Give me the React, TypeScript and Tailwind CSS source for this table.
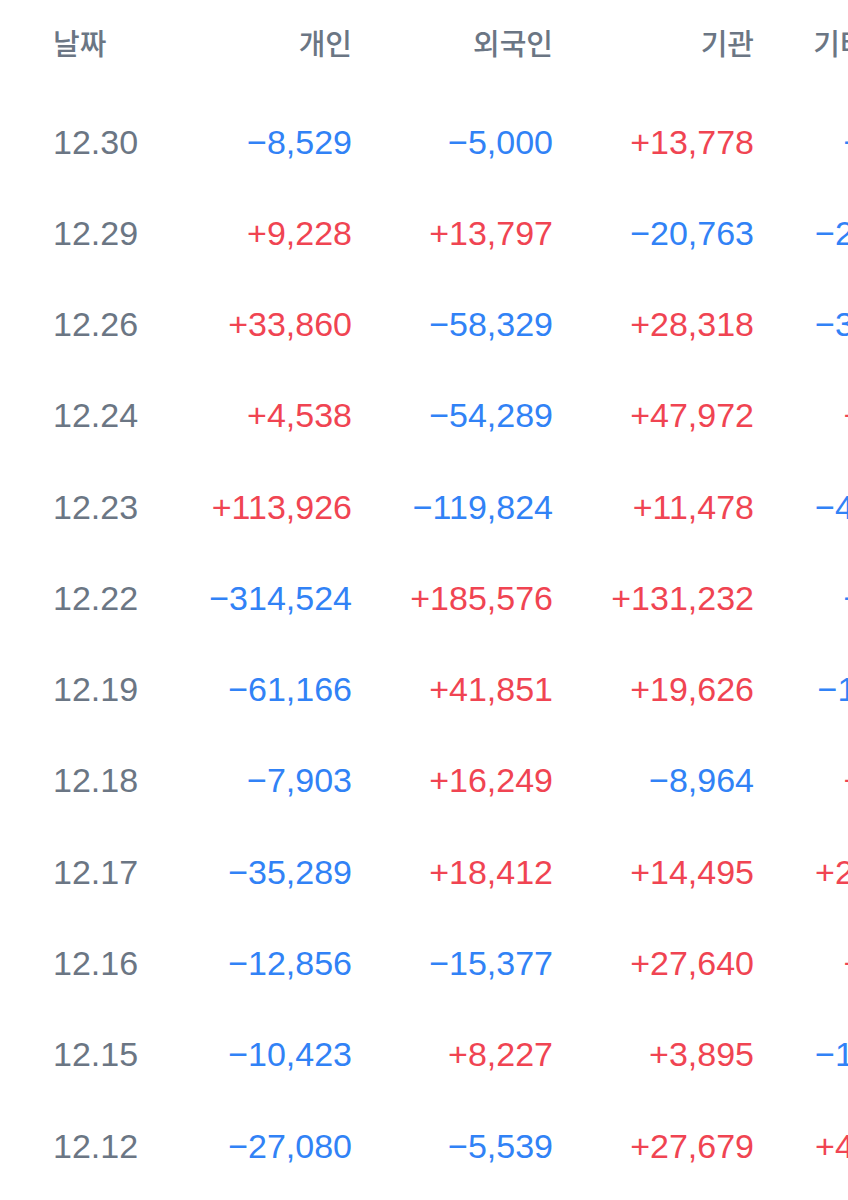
import React from 'react';

/**
 * 투자자별 순매매 표
 * 날짜별 개인/외국인/기관/기타법인 순매수 수량
 */
type Row = { date: string; values: string[] };

const rows: Row[] = [
  { date: '12.30', values: ['-8,529', '-5,000', '+13,778', '-249'] },
  { date: '12.29', values: ['+9,228', '+13,797', '-20,763', '-2,262'] },
  { date: '12.26', values: ['+33,860', '-58,329', '+28,318', '-3,849'] },
  { date: '12.24', values: ['+4,538', '-54,289', '+47,972', '+779'] },
  { date: '12.23', values: ['+113,926', '-119,824', '+11,478', '-4,580'] },
  { date: '12.22', values: ['-314,524', '+185,576', '+131,232', '-284'] },
  { date: '12.19', values: ['-61,166', '+41,851', '+19,626', '-1,311'] },
  { date: '12.18', values: ['-7,903', '+16,249', '-8,964', '+618'] },
  { date: '12.17', values: ['-35,289', '+18,412', '+14,495', '+2,382'] },
  { date: '12.16', values: ['-12,856', '-15,377', '+27,640', '+593'] },
  { date: '12.15', values: ['-10,423', '+8,227', '+3,895', '-1,699'] },
  { date: '12.12', values: ['-27,080', '-5,539', '+27,679', '+4,940'] },
];

const headers = ['개인', '외국인', '기관', '기타법인'];

const gridCols = 'grid grid-cols-[100px_199px_201px_201px_166px] pl-[53px] w-[920px]';

function Value({ v }: { v: string }) {
  const negative = v.startsWith('-');
  const text = negative ? '\u2212' + v.slice(1) : v;
  return (
    <span className={`text-right ${negative ? 'text-[#3182f6]' : 'text-[#f04452]'}`}>{text}</span>
  );
}

export default function App() {
  return (
    <div
      className="w-full min-h-[1200px] bg-white overflow-hidden"
      style={{ fontFamily: '"Liberation Sans", "Noto Sans CJK KR", sans-serif' }}
    >
      {/* Header */}
      <div className={`${gridCols} h-[90px] items-center text-[29px] font-medium text-[#6b7684] leading-none`}>
        <span>날짜</span>
        {headers.map(h => (
          <span key={h} className="text-right">{h}</span>
        ))}
      </div>

      {/* Rows */}
      <div className="pt-[6px]">
        {rows.map(row => (
          <div key={row.date} className={`${gridCols} h-[91.27px] items-center text-[34px] leading-none`}>
            <span className="text-[#6b7684]">{row.date}</span>
            {row.values.map((v, i) => (
              <Value key={i} v={v} />
            ))}
          </div>
        ))}
      </div>
    </div>
  );
}
